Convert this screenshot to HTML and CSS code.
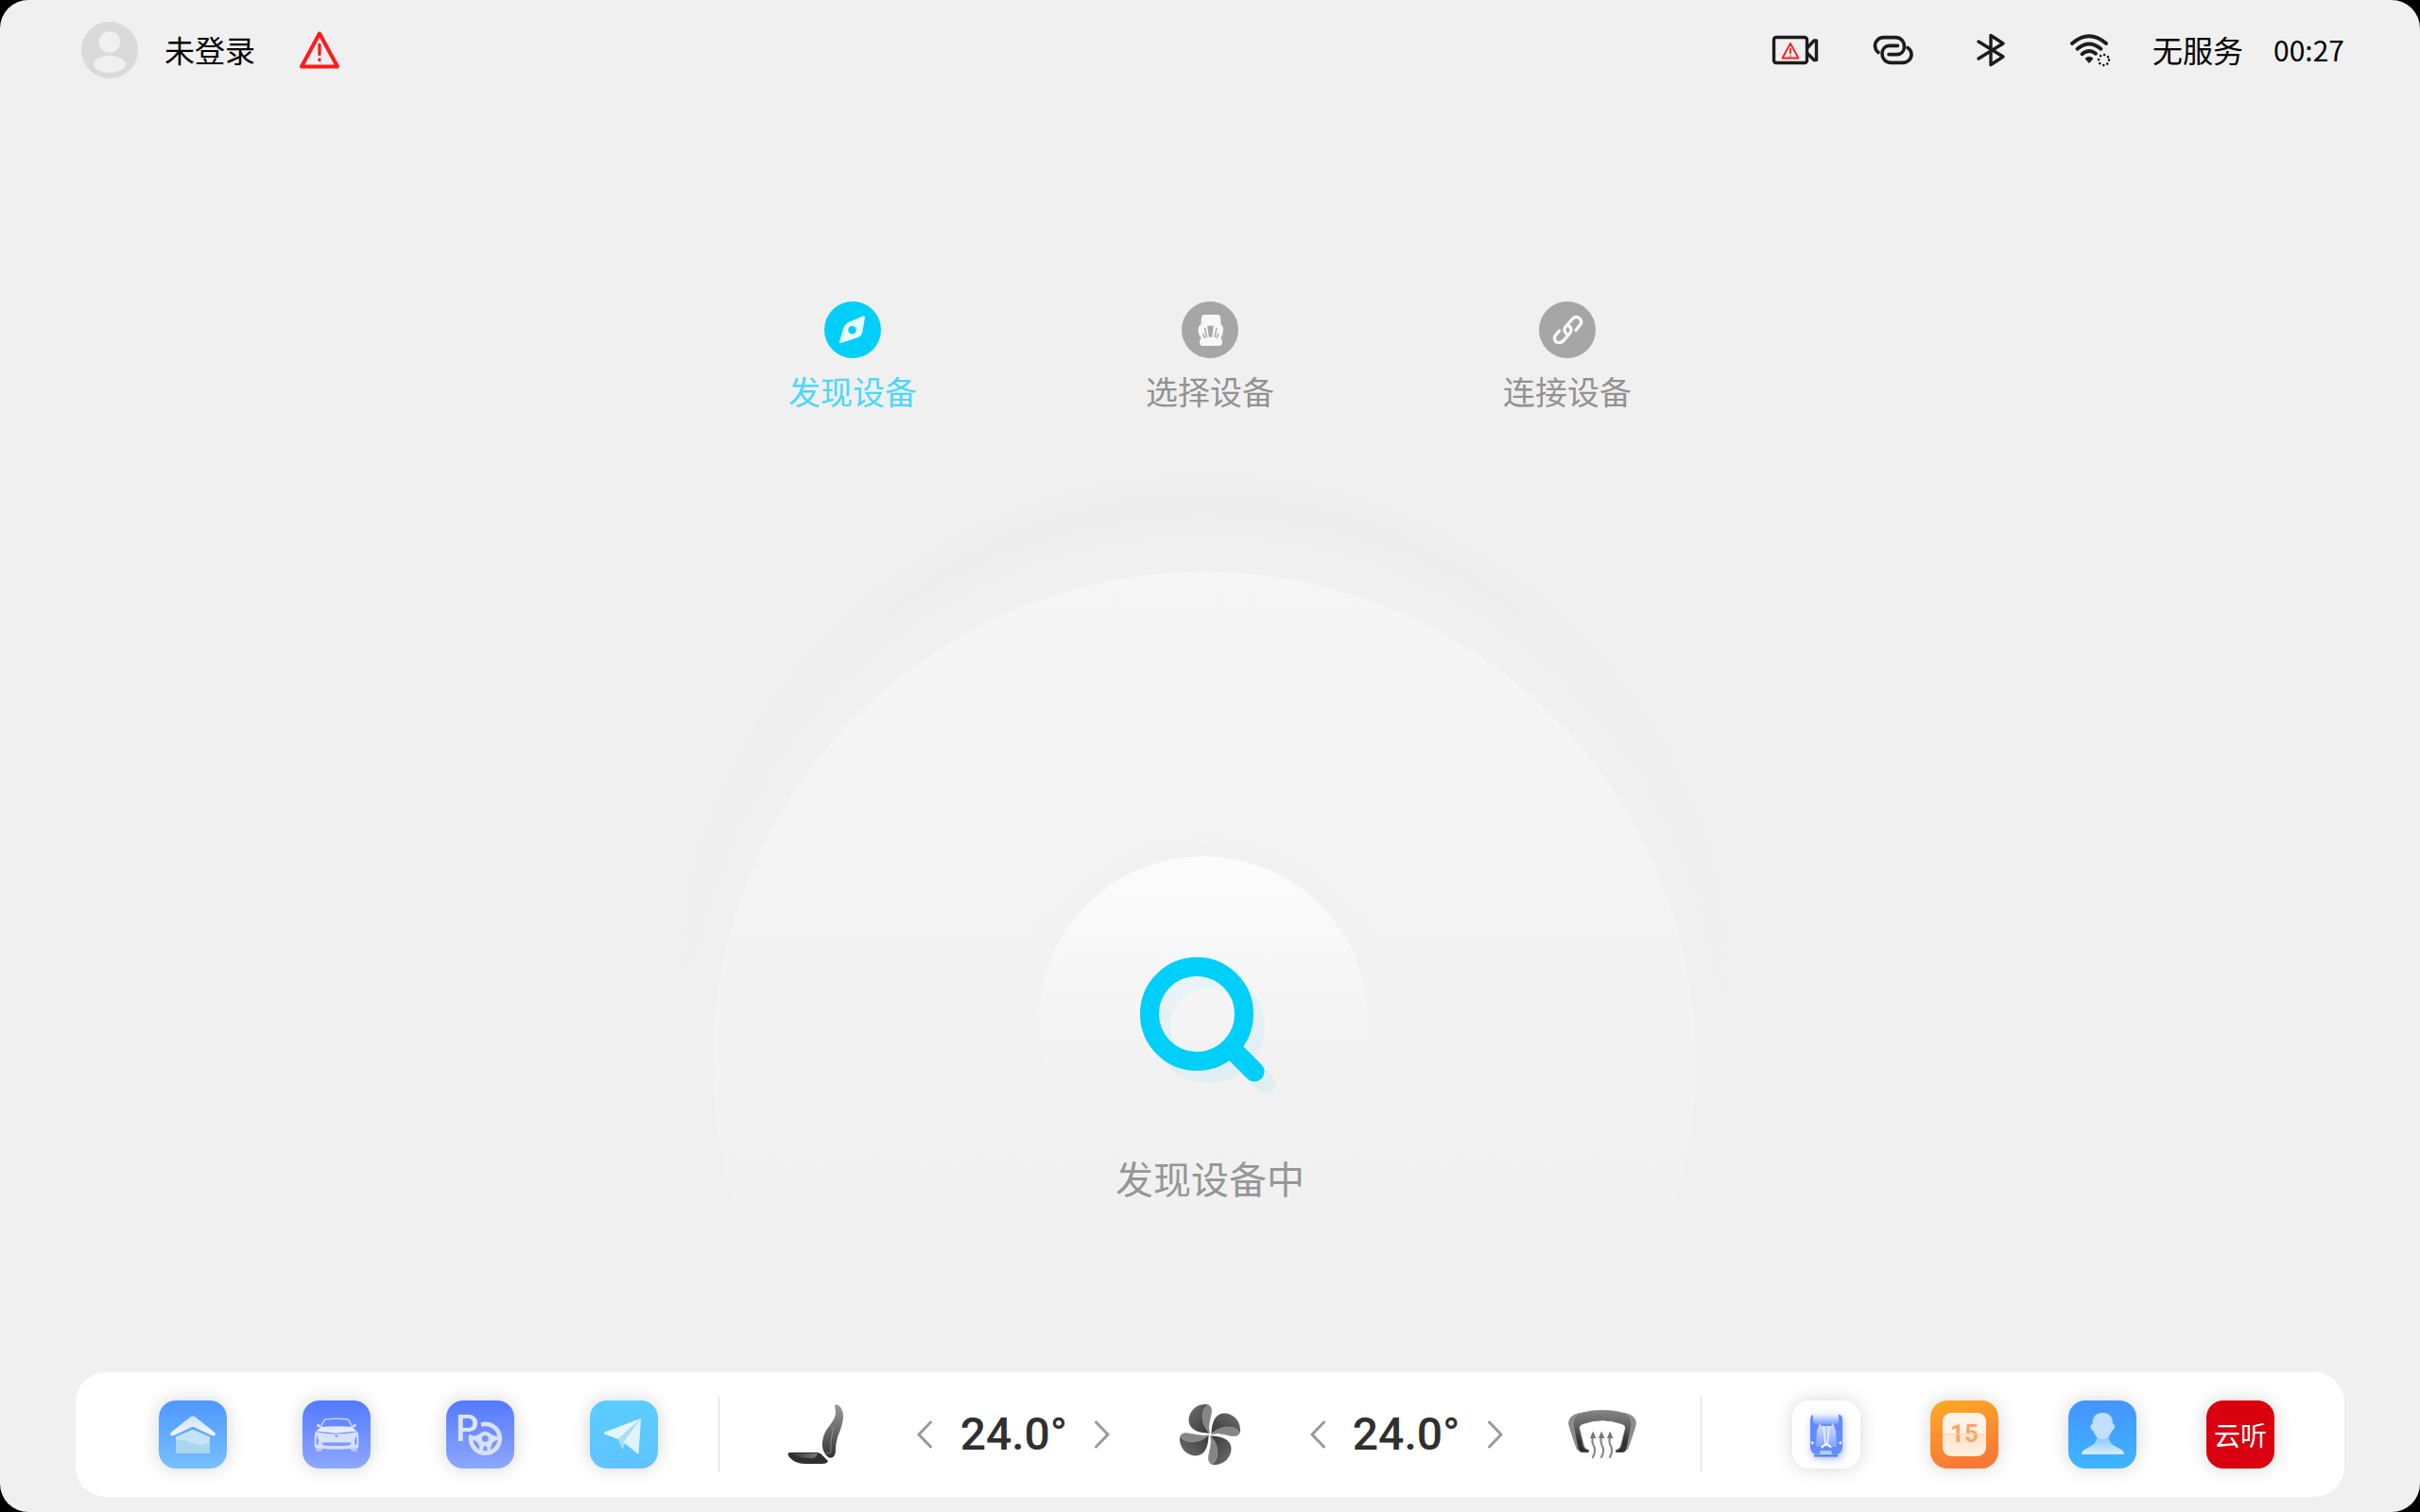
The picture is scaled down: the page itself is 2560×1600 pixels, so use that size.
FILE: index.html
```html
<!DOCTYPE html>
<html lang="zh-CN">
<head>
<meta charset="utf-8">
<meta name="viewport" content="width=device-width, initial-scale=1">
<title>发现设备</title>
<link rel="stylesheet" href="styles.css">
</head>
<body>
<div class="screen">
  <header class="status-bar">
    <button class="account" type="button">
      <svg class="avatar" viewBox="0 0 60 60" aria-hidden="true">
        <circle cx="30" cy="30" r="30" fill="#dadada"/>
        <circle cx="30" cy="21.500" r="11.200" fill="#f0f0f0"/>
        <ellipse cx="30" cy="45" rx="17" ry="9" fill="#f0f0f0"/>
      </svg>
      <span>未登录</span>
    </button>
    <svg class="alert" viewBox="0 0 44 42" aria-label="警告" role="img">
      <path d="M22 3.500 41 38.500H3Z" fill="none" stroke="#ff1a1a" stroke-width="4" stroke-linejoin="round"/>
      <path d="M22 15.500v10M22 31v.500" stroke="#ff1a1a" stroke-width="3.400" stroke-linecap="round"/>
    </svg>
    <div class="status-icons">
      <svg viewBox="0 0 64 40" role="img" aria-label="行车记录仪">
        <g fill="none" stroke="#1c1c1e" stroke-width="3.400" stroke-linejoin="round">
          <rect x="9.500" y="6.500" width="35" height="27" rx="2.500"/>
          <path d="M45 17.500 52 10h2.500v20.500H52L45 23.500"/>
        </g>
        <path d="M27 13l8.500 15.500h-17Z" fill="none" stroke="#ff1a1a" stroke-width="1.800" stroke-linejoin="round"/>
        <path d="M27 18v6m0 1.500v1.200" stroke="#ff1a1a" stroke-width="1.800"/>
      </svg>
      <svg viewBox="0 0 64 40" role="img" aria-label="互联">
        <g transform="translate(11 5)" fill="none" stroke="#1c1c1e" stroke-width="3.600" stroke-linecap="round">
          <path d="M5 17.500C2.500 15.500 1.500 13 1.500 10.500 1.500 5.500 5.500 1.600 10.500 1.600H23C29 1.600 32.500 6 32.500 11 32.500 16.500 29 19.600 25 19.600H16"/>
          <path d="M36 12.500C39 14.500 40 17 40 19.500 40 24.500 36 28.400 31 28.400H18.500C12.500 28.400 9 24 9 19 9 13.500 12.500 10.400 16.500 10.400H25.500"/>
        </g>
      </svg>
      <svg viewBox="0 0 64 40" role="img" aria-label="蓝牙">
        <path d="M18 11 44 27 31 35.500V4.500L44 13 18 29" fill="none" stroke="#1c1c1e" stroke-width="3.400" stroke-linejoin="round" stroke-linecap="round"/>
      </svg>
      <svg viewBox="0 0 64 40" role="img" aria-label="无线网络">
        <g fill="none" stroke="#1c1c1e" stroke-width="3.800" stroke-linecap="round">
          <path d="M13 13Q31 -2.500 49 13"/>
          <path d="M18.500 18.800Q31 8.200 43.500 18.800"/>
          <path d="M23.500 24.200Q31 18 38 23.800"/>
        </g>
        <path d="M27 29Q31 25.500 35 29L31 33.500Z" fill="#1c1c1e" stroke="#1c1c1e" stroke-linejoin="round"/>
        <circle cx="46.500" cy="30.500" r="5.500" fill="none" stroke="#1c1c1e" stroke-width="2.600" stroke-linecap="round" stroke-dasharray=".1 4.219"/>
      </svg>
    </div>
    <span>无服务</span>
    <time class="clock">00:27</time>
  </header>

  <main class="stage">
    <ol class="steps">
      <li class="step step-current" aria-current="step">
        <svg viewBox="0 0 60 60" aria-hidden="true">
          <circle cx="30" cy="30" r="30" fill="#00cffa"/>
          <path d="M43 16.500 40.500 32Q39.500 36 36 38L17.500 44Q15.500 44.500 16 42.500L20 29Q21 25 24.500 22.500L41 15.500Q43 15 43 16.500Z" fill="#e8fbff"/>
          <circle cx="29.500" cy="30.300" r="4.200" fill="#00cffa"/>
        </svg>
        <span>发现设备</span>
      </li>
      <li class="step">
        <svg viewBox="0 0 60 60" aria-hidden="true">
          <circle cx="30" cy="30" r="30" fill="#a6a6a6"/>
          <path d="M24 14H38Q41 14 41 17L41.500 24Q44 26 44 30 44 35 41.500 38L43 42Q43 47 40 47H22Q19 47 19 42L20.500 38Q17.500 35 17.500 30 17.500 26 20.500 24L21 17Q21 14 24 14Z" fill="#f7f7f7"/>
          <path d="M28 26.500H33L31.500 37H29.500ZM24.500 28 26.500 38M37 28 35 38M22.500 34 24.500 39M39 34 37 39" fill="#a6a6a6" stroke="#a6a6a6" stroke-width="1.400"/>
        </svg>
        <span>选择设备</span>
      </li>
      <li class="step">
        <svg viewBox="0 0 60 60" aria-hidden="true">
          <circle cx="30" cy="30" r="30" fill="#a6a6a6"/>
          <g fill="none" stroke="#f7f7f7" stroke-width="3.400" stroke-linecap="round" stroke-linejoin="round">
            <path d="M31 35.500Q25.500 32.500 27.500 27.500L35 19Q38 15.500 41.500 17 45.500 19 44.500 23.500L39 30.500"/>
            <path d="M30.500 25Q35.500 28 33.500 32.500L25.500 42Q21 45 18 42.500 15.500 40 17 36.500L21.500 31"/>
          </g>
        </svg>
        <span>连接设备</span>
      </li>
    </ol>

    <figure class="scanner">
      <svg class="radar" viewBox="0 0 1200 960" aria-hidden="true">
        <defs>
          <linearGradient id="wave" x1="0" y1="0" x2="0" y2="1">
            <stop offset="0" stop-color="#f6f6f6"/>
            <stop offset=".5" stop-color="#f2f2f2"/>
            <stop offset=".78" stop-color="#f0f0f0"/>
          </linearGradient>
          <linearGradient id="core" x1="0" y1="0" x2="0" y2="1">
            <stop offset="0" stop-color="#fcfcfc"/>
            <stop offset=".4" stop-color="#f6f6f6"/>
            <stop offset=".8" stop-color="#f1f1f1" stop-opacity="0"/>
          </linearGradient>
          <linearGradient id="halo" x1="0" y1="0" x2="0" y2="1">
            <stop offset="0" stop-color="#ededed"/>
            <stop offset=".85" stop-color="#efefef" stop-opacity="0"/>
          </linearGradient>
          <filter id="soft" x="-10%" y="-10%" width="120%" height="120%"><feGaussianBlur stdDeviation="12"/></filter>
        </defs>
        <circle cx="594" cy="610" r="556" fill="url(#halo)" filter="url(#soft)"/>
        <circle cx="594" cy="640" r="546" fill="#f0f0f0" filter="url(#soft)"/>
        <circle cx="594" cy="665" r="520" fill="url(#wave)"/>
        <circle cx="593" cy="614" r="182" fill="url(#halo)" opacity=".4" filter="url(#soft)"/>
        <circle cx="593" cy="620" r="174" fill="url(#core)"/>
      </svg>
      <div class="scanner-status">
        <svg class="magnifier" viewBox="0 0 160 160" aria-hidden="true">
          <defs>
            <g id="lens" fill="none" stroke="#00cff9" stroke-linecap="round">
              <circle cx="66" cy="65" r="50" stroke-width="20"/>
              <path d="M103 102 127 126" stroke-width="21"/>
            </g>
          </defs>
          <use href="#lens" x="12" y="13" opacity=".06"/>
          <use href="#lens"/>
        </svg>
        <figcaption>发现设备中</figcaption>
      </div>
    </figure>
  </main>

  <nav class="dock" aria-label="快捷栏">
    <div class="apps apps-left">
      <button class="app" type="button" aria-label="主页">
        <svg viewBox="0 0 72 72" aria-hidden="true">
          <defs>
            <linearGradient id="homeBg" x1="0" y1="0" x2="0" y2="1"><stop stop-color="#4f98ff"/><stop offset="1" stop-color="#77bfff"/></linearGradient>
            <linearGradient id="roof" x1="0" y1="0" x2="0" y2="1"><stop stop-color="#c9e2ff"/><stop offset="1" stop-color="#f4f9ff"/></linearGradient>
          </defs>
          <rect width="72" height="72" rx="18" fill="url(#homeBg)"/>
          <path d="M33.200 17.500Q36 15.300 38.800 17.500L59.300 34Q61 37 57.500 37.200L54 36 38.500 28.700Q36 27.500 33.500 28.700L18 36 14.500 37.200Q11 37 12.700 34Z" fill="url(#roof)"/>
          <path d="M18 38.500 34 31.500Q36 30.700 38 31.500L54 38.500V55Q54 56 53 56H19Q18 56 18 55Z" fill="#c6e2fc"/>
          <path d="M18 43Q24 41 32 43.500 41 48 47 47 52 46 54 42V55Q54 56 53 56H19Q18 56 18 55Z" fill="#a9d7ee"/>
        </svg>
      </button>
      <button class="app" type="button" aria-label="车辆">
        <svg viewBox="0 0 72 72" aria-hidden="true">
          <defs><linearGradient id="violet" x1="0" y1="0" x2="0" y2="1"><stop stop-color="#5479ff"/><stop offset="1" stop-color="#8da8ff"/></linearGradient></defs>
          <rect width="72" height="72" rx="18" fill="url(#violet)"/>
          <path d="M14 49h7v3q0 2-2 2h-3q-2 0-2-2ZM51 49h7v3q0 2-2 2h-3q-2 0-2-2Z" fill="#b5c5ff"/>
          <path d="M19.500 28Q22 22 24 20 36 18.500 48 20 50 22 52.500 28" fill="none" stroke="#c3d0ff" stroke-width="1.600"/>
          <path d="M15 25.500Q18 24 19.500 27.500L18 28.500Q15 28 15 25.500ZM57 25.500Q54 24 52.500 27.500L54 28.500Q57 28 57 25.500Z" fill="#d5deff"/>
          <path d="M19.500 28Q36 26.500 52.500 28L57.500 32.500Q48 33.500 36 34.800 24 33.500 14.500 32.500Z" fill="#e6ecff"/>
          <path fill-rule="evenodd" d="M13.500 33Q25 35.500 36 35.500T58.500 33Q60 41 59 50Q36 53.500 13 50 12 41 13.500 33ZM15 37l2 5-.500 5.500L14.500 46ZM57 37l-2 5 .500 5.500 2-1.500ZM20 44.500H52L49.500 47.500Q36 48.500 22.500 47.500Z" fill="#d8e1ff"/>
          <path d="M34.500 36 36 39l1.500-3" fill="none" stroke="#6f8cff"/>
        </svg>
      </button>
      <button class="app" type="button" aria-label="泊车">
        <svg viewBox="0 0 72 72" aria-hidden="true">
          <rect width="72" height="72" rx="18" fill="url(#violet)"/>
          <text class="glyph-parking" x="10" y="43">P</text>
          <path d="M37 25.600A15.400 15.400 0 1 1 26.500 36.500" fill="none" stroke="#d8e1ff" stroke-width="4.600"/>
          <path fill-rule="evenodd" d="M26 38Q33 38 37 34 41 31.500 45.500 34 49 38 56 38V41.500Q50 42 48 47 46.500 51 47 55H43.500Q44 48 41.300 48T39 55H35.500Q36 51 34.500 47 32.500 42 26 41.500ZM41.300 37A3.400 3.400 0 1 0 41.300 43.800 3.400 3.400 0 1 0 41.300 37Z" fill="#d8e1ff"/>
        </svg>
      </button>
      <button class="app" type="button" aria-label="导航">
        <svg viewBox="0 0 72 72" aria-hidden="true">
          <defs><linearGradient id="sky" x1="0" y1="0" x2="0" y2="1"><stop stop-color="#5acdff"/><stop offset="1" stop-color="#5fc3ff"/></linearGradient></defs>
          <rect width="72" height="72" rx="18" fill="url(#sky)"/>
          <path d="M54 19 15.500 33.500Q14.500 34.500 15.500 35.500L30 41Z" fill="#e6f6ff"/>
          <path d="M54 19 30 41 34.500 52 37 45Z" fill="#a8def8"/>
          <path d="M54 19 35.500 44 50 56Q51.500 56.500 51.700 55Z" fill="#dff3ff"/>
        </svg>
      </button>
    </div>

    <div class="climate">
      <button class="plain" type="button" aria-label="座椅">
        <svg class="icon-seat" viewBox="0 0 64 64" aria-hidden="true">
          <defs>
            <linearGradient id="back" x1="0" y1="0" x2="0" y2="1"><stop stop-color="#9a9a9a"/><stop offset=".5" stop-color="#686868"/><stop offset="1" stop-color="#303030"/></linearGradient>
            <linearGradient id="pad" x1="0" y1="0" x2="1" y2="0"><stop stop-color="#3a3a3a"/><stop offset="1" stop-color="#777"/></linearGradient>
          </defs>
          <path d="M50 1Q53-1 56 3 59 7 59 13 59 18 56 27 51 38 51 48 51 54 48 56 44 58 41 54 36 48 37 40 38 30 45 22 51 14 51 9Z" fill="url(#back)"/>
          <path d="M49 24Q45 40 46 50 45 53 41 51" fill="none" stroke="#999" stroke-width=".8"/>
          <path d="M2 51H31Q34 51 36 53L43 60Q42 63 37 63H18Q8 63 2 56-1 52 2 51Z" fill="#303030"/>
          <path d="M5 52H32Q30 58 24 57 13 57 5 52Z" fill="url(#pad)"/>
        </svg>
      </button>
      <div class="temperature">
        <button class="plain" type="button" aria-label="降低左侧温度"><svg class="chevron" viewBox="0 0 16 30" aria-hidden="true"><path d="M14.500 2 2 15 14.500 28"/></svg></button>
        <output>24.0°</output>
        <button class="plain" type="button" aria-label="升高左侧温度"><svg class="chevron" viewBox="0 0 16 30" aria-hidden="true"><path d="M1.500 2 14 15 1.500 28"/></svg></button>
      </div>
      <button class="plain" type="button" aria-label="风量">
        <svg class="icon-fan" viewBox="-1 -1 66 66" aria-hidden="true">
          <defs>
            <linearGradient id="bladeDark" x1="0" y1="0" x2="1" y2="1"><stop stop-color="#707070"/><stop offset="1" stop-color="#353535"/></linearGradient>
            <g id="blade">
              <path d="M31.500 30.500C17 30.500 9.500 25 9.500 17 9.500 8 17 0 27 0 31 0 33.500 2.500 33.500 6.500 33.500 14 29.500 20 31.500 30.500Z" fill="url(#bladeDark)"/>
              <path d="M31.500 30.500C22 21 22 5 30 .5 32.500 1.500 33.500 3.500 33.500 6.500 33.500 14 29.500 20 31.500 30.500Z" fill="#858585" stroke="#aaa" stroke-width=".6"/>
            </g>
          </defs>
          <use href="#blade"/>
          <use href="#blade" transform="rotate(90 32 32)"/>
          <use href="#blade" transform="rotate(180 32 32)"/>
          <use href="#blade" transform="rotate(270 32 32)"/>
        </svg>
      </button>
      <div class="temperature">
        <button class="plain" type="button" aria-label="降低右侧温度"><svg class="chevron" viewBox="0 0 16 30" aria-hidden="true"><path d="M14.500 2 2 15 14.500 28"/></svg></button>
        <output>24.0°</output>
        <button class="plain" type="button" aria-label="升高右侧温度"><svg class="chevron" viewBox="0 0 16 30" aria-hidden="true"><path d="M1.500 2 14 15 1.500 28"/></svg></button>
      </div>
      <button class="plain" type="button" aria-label="除雾">
        <svg class="icon-defrost" viewBox="0 0 72 52" aria-hidden="true">
          <defs><linearGradient id="shield" x1="0" y1="0" x2="0" y2="1"><stop stop-color="#858585"/><stop offset=".4" stop-color="#606060"/><stop offset=".75" stop-color="#303030"/></linearGradient></defs>
          <path d="M12 3Q0 6 0 14 1 20 9 42L18 44 54 44 63 42Q71 20 72 14 72 6 60 3L54 14H18Z" fill="#8b8b8b"/>
          <path d="M10 4Q36-4 62 4 67 9 67 15L62 40Q61 45 57 45H51Q48 44 52 42 55 41 56 38L60 19Q60 16 56 15 36 8 16 15 12 16 12 19L16 38Q17 41 20 42 24 44 21 45H15Q11 45 10 40L5 15Q5 9 10 4Z" fill="url(#shield)" stroke="#b0b0b0" stroke-width=".5"/>
          <path d="M17 38 12 19Q12 16 16 15 36 8 56 15 60 16 60 19L55 38Q54 41 50 42V46H22V42Q18 41 17 38Z" fill="#fff"/>
          <g fill="none" stroke="#8a8a8a" stroke-width="2.200" stroke-linecap="round">
            <path d="M26 50Q30 43 26.500 37 24.500 33 26.500 26"/>
            <path d="M35 50Q39 43 35.500 37 33.500 33 35.500 26"/>
            <path d="M44 50Q48 43 44.500 37 42.500 33 44.500 26"/>
          </g>
          <path d="M23 30 26 22.500 29.500 30ZM32 30 35 22.500 38.500 30ZM41 30 44 22.500 47.500 30Z" fill="#777"/>
        </svg>
      </button>
    </div>

    <div class="apps apps-right">
      <button class="app" type="button" aria-label="座椅应用">
        <svg viewBox="0 0 72 72" aria-hidden="true">
          <defs>
            <filter id="glow" x="-50%" y="-50%" width="200%" height="200%"><feGaussianBlur stdDeviation="4"/></filter>
            <linearGradient id="headrest" x1="0" y1="0" x2="0" y2="1"><stop stop-color="#fff"/><stop offset="1" stop-color="#79a0ff"/></linearGradient>
            <linearGradient id="cushion" x1="0" y1="0" x2="0" y2="1"><stop stop-color="#d4e1ff"/><stop offset="1" stop-color="#84a4ff"/></linearGradient>
          </defs>
          <rect width="72" height="72" rx="18" fill="#fff"/>
          <rect x="21" y="17" width="32" height="44" rx="6" fill="#6f90ff" opacity=".7" filter="url(#glow)"/>
          <path d="M22 15H50Q53 16 53 20V50Q52 57 46 57H26Q20 57 19 50V20Q19 16 22 15Z" fill="#628dff"/>
          <path d="M22 13Q36 15 49 13V22Q48 25 44 25H27Q23 25 22 22Z" fill="url(#headrest)"/>
          <path d="M29 24 31 27H41L43 24 46 32 47 49H25L26 32Z" fill="url(#cushion)"/>
          <path d="M33 27 35 46M39 27 37 46" stroke="#eef3ff" stroke-width="1.600"/>
          <path d="M31 50Q36 43 41 50" fill="none" stroke="#fff" stroke-width="2"/>
          <path d="M19.500 43 23 44.500 21 47ZM52.500 43 49 44.500 51 47Z" fill="#fff"/>
          <path d="M30 53H41L43 58H28Z" fill="#b5c9ff"/>
          <path d="M23 57.500H48V59.500H23Z" fill="#4478ef"/>
        </svg>
      </button>
      <button class="app" type="button" aria-label="日历">
        <svg viewBox="0 0 72 72" aria-hidden="true">
          <defs>
            <linearGradient id="amber" x1="0" y1="0" x2=".3" y2="1"><stop stop-color="#ffab24"/><stop offset="1" stop-color="#f87936"/></linearGradient>
            <linearGradient id="page" x1="0" y1="0" x2="0" y2="1"><stop offset=".48" stop-color="#fff3e8"/><stop offset=".5" stop-color="#fde4cc"/><stop offset="1" stop-color="#fff0e2"/></linearGradient>
          </defs>
          <rect width="72" height="72" rx="18" fill="url(#amber)"/>
          <rect x="13" y="13" width="46" height="46" rx="9" fill="url(#page)"/>
          <text class="glyph-date" x="36" y="44">15</text>
          <path d="M13 35.500H59" stroke="#f8d5b8"/>
        </svg>
      </button>
      <button class="app" type="button" aria-label="个人中心">
        <svg viewBox="0 0 72 72" aria-hidden="true">
          <defs>
            <linearGradient id="azure" x1="0" y1="0" x2="0" y2="1"><stop stop-color="#4594ff"/><stop offset="1" stop-color="#3eb5ff"/></linearGradient>
            <linearGradient id="bust" x1="0" y1="0" x2="0" y2="1"><stop stop-color="#7cc0ff"/><stop offset="1" stop-color="#d8efff"/></linearGradient>
          </defs>
          <rect width="72" height="72" rx="18" fill="url(#azure)"/>
          <path d="M30 36H43Q42 44 48 47.500L57 52.500Q59 54 59 57H14Q14 54 16 52.500L25 47.500Q31 44 30 36Z" fill="url(#bust)"/>
          <path d="M36.300 13Q47 13 47 25 49.500 25 49 28 48.500 31.500 46 32 44 38 40.500 40 36.300 42 32 40 28.500 38 26.500 32 24 31.500 23.600 28 23 25 25.500 25 25.500 13 36.300 13Z" fill="#c2dfff"/>
        </svg>
      </button>
      <button class="app app-radio" type="button">云听</button>
    </div>
  </nav>
</div>
</body>
</html>
```
FILE: styles.css
```css
* {
  box-sizing: border-box;
}

body {
  margin: 0;
  background: #000;
  color: #000;
  font-family: "Noto Sans CJK SC", "Noto Sans", sans-serif;
}

button {
  margin: 0;
  padding: 0;
  border: 0;
  background: none;
  color: inherit;
  font: inherit;
  cursor: pointer;
}

svg {
  display: block;
  flex: none;
}

.screen {
  display: flex;
  flex-direction: column;
  min-height: 100vh;
  border-radius: 30px;
  background: #f0f0f0;
}

.status-bar {
  display: flex;
  align-items: center;
  height: 106px;
  padding: 0 80px 0 86px;
  font-size: 32px;
  line-height: 38px;
  white-space: nowrap;
}

.status-bar span,
.clock {
  padding-bottom: 2px;
}

.account {
  display: flex;
  align-items: center;
  gap: 28px;
}

.avatar {
  width: 60px;
  height: 60px;
}

.alert {
  width: 44px;
  height: 42px;
  margin-left: 46px;
}

.status-icons {
  display: flex;
  gap: 40px;
  margin-left: auto;
  margin-right: 34px;
}

.status-icons svg {
  width: 64px;
  height: 40px;
}

.clock {
  margin-left: 32px;
  font-size: 30px;
}

.stage {
  flex: 1;
}

.steps {
  display: flex;
  justify-content: center;
  margin: 0;
  padding: 213px 0 26px;
  list-style: none;
}

.step {
  display: flex;
  flex-direction: column;
  align-items: center;
  gap: 15px;
  width: 378px;
  color: #929292;
  font-size: 34px;
  line-height: 40px;
}

.step svg {
  width: 60px;
  height: 60px;
}

.step-current {
  color: #4bd8f7;
}

.scanner {
  display: grid;
  justify-items: center;
  margin: 0;
}

.radar,
.scanner-status {
  grid-area: 1 / 1;
}

.radar {
  width: 1200px;
  height: 960px;
}

.scanner-status {
  display: flex;
  flex-direction: column;
  align-items: center;
  gap: 54px;
  padding-top: 548px;
  color: #969696;
  font-size: 40px;
  line-height: 48px;
}

.magnifier {
  width: 160px;
  height: 160px;
}

.dock {
  display: flex;
  align-items: center;
  height: 132px;
  margin: 0 80px 16px;
  border-radius: 32px;
  background: #fff;
}

.apps {
  display: flex;
}

.apps-left {
  gap: 80px;
  padding: 0 64px 0 88px;
}

.apps-right {
  gap: 74px;
  padding: 0 74px 0 96px;
}

.app {
  width: 72px;
  height: 72px;
  border-radius: 18px;
  box-shadow: 0 0 20px rgba(0, 0, 0, 0.16);
}

.app svg {
  width: 72px;
  height: 72px;
}

.app-radio {
  background: #d9000f;
  color: #fff;
  font-size: 28px;
}

.glyph-parking {
  fill: #dfe6ff;
  font: 500 38px Roboto, sans-serif;
}

.glyph-date {
  fill: #fba56c;
  font: 700 26px Roboto, sans-serif;
  text-anchor: middle;
}

.climate {
  display: grid;
  flex: 1;
  grid-template-columns: repeat(5, 1fr);
  align-items: center;
  justify-items: center;
  height: 80px;
  border: solid #d9d9d9;
  border-width: 0 1px;
}

.icon-seat {
  width: 64px;
  height: 64px;
}

.icon-fan {
  width: 66px;
  height: 66px;
}

.icon-defrost {
  width: 72px;
  height: 52px;
}

.temperature {
  display: flex;
  align-items: center;
  justify-content: space-between;
  width: 204px;
  color: #303030;
  font: 500 48px/56px Roboto, sans-serif;
}

.chevron {
  width: 16px;
  height: 30px;
  fill: none;
  stroke: #999;
  stroke-width: 3px;
  stroke-linecap: round;
}
```
